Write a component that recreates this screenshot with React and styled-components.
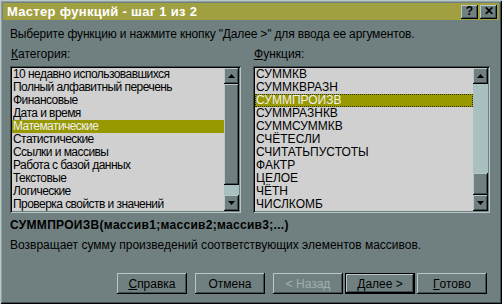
import React from "react";
import styled, { createGlobalStyle } from "styled-components";

const FACE = "#708080";
const LIGHT = "#b8c8c8";
const DARK = "#405050";

const Global = createGlobalStyle`
  html, body {
    margin: 0;
    padding: 0;
    background: ${FACE};
  }
  * { box-sizing: border-box; }
`;

const Window = styled.div`
  width: 502px;
  height: 304px;
  padding: 3px;
  background: ${FACE};
  font-family: "Liberation Sans", Arial, sans-serif;
  font-size: 12px;
  color: #000;
  display: flex;
  flex-direction: column;
  box-shadow: inset 1px 1px ${LIGHT}, inset -1px -1px #000,
    inset 2px 2px #90a0a0, inset -2px -2px ${DARK};
`;

const TitleBar = styled.div`
  height: 17px;
  background: #a0a040;
  display: flex;
  align-items: center;
  padding: 0 2px 0 4px;
`;

const Title = styled.div`
  flex: 1;
  color: #fff;
  font-weight: bold;
  font-size: 13px;
  letter-spacing: 0.3px;
`;

const raised = `
  background: ${FACE};
  box-shadow: inset -1px -1px #000, inset 1px 1px ${LIGHT},
    inset -2px -2px ${DARK};
`;

const CapButton = styled.div`
  ${raised}
  width: 17px;
  height: 14px;
  margin-left: ${(p) => (p.$gap ? "2px" : "0")};
  display: flex;
  align-items: center;
  justify-content: center;
  font-weight: bold;
  font-size: 12px;
  line-height: 1;
  padding-bottom: 1px;
`;

const Content = styled.div`
  flex: 1;
  display: flex;
  flex-direction: column;
  padding: 0 9px 0 7px;
`;

const Line = styled.div`
  height: 14px;
  line-height: 14px;
  margin-top: ${(p) => p.$mt || 0}px;
  font-weight: ${(p) => (p.$bold ? "bold" : "normal")};
  letter-spacing: ${(p) => p.$ls || 0}px;
  white-space: nowrap;
`;

const Columns = styled.div`
  display: flex;
  gap: 12px;
  margin-top: 6px;
`;

const Column = styled.div`
  width: ${(p) => p.$w}px;
  display: flex;
  flex-direction: column;
`;

const Label = styled.div`
  height: 14px;
  line-height: 14px;
  margin-bottom: 5px;
  margin-left: 1px;
`;

const ListBox = styled.div`
  height: 147px;
  padding: 2px;
  background: #d0d0d0;
  display: flex;
  letter-spacing: ${(p) => p.$ls}px;
  box-shadow: inset 1px 1px ${DARK}, inset -1px -1px ${LIGHT},
    inset 2px 2px #000, inset -2px -2px ${FACE};
`;

const Items = styled.div`
  flex: 1;
  display: flex;
  flex-direction: column;
  overflow: hidden;
`;

const Item = styled.div`
  height: 13px;
  line-height: 13px;
  padding-left: 1px;
  white-space: nowrap;
  background: ${(p) => (p.$sel ? "#989800" : "transparent")};
  color: ${(p) => (p.$sel ? "#f0f0f0" : "#000")};
  outline: ${(p) => (p.$focus ? "1px dotted #303000" : "none")};
  outline-offset: -1px;
`;

const ScrollBar = styled.div`
  width: 15px;
  display: flex;
  flex-direction: column;
  background: #a8c0c0;
`;

const Arrow = styled.div`
  ${raised}
  height: 16px;
  display: flex;
  align-items: center;
  justify-content: center;
`;

const Track = styled.div`
  flex: 1;
  display: flex;
  flex-direction: column;
`;

const Thumb = styled.div`
  ${raised}
`;

const Buttons = styled.div`
  display: flex;
  justify-content: flex-end;
  margin-top: 21px;
  padding-right: 3px;
`;

const Button = styled.div`
  ${raised}
  width: 70px;
  height: 21px;
  margin-left: ${(p) => p.$ml}px;
  display: flex;
  align-items: center;
  justify-content: center;
  color: ${(p) => (p.$disabled ? "#a0b0b0" : "#000")};
  ${(p) =>
    p.$default &&
    `box-shadow: inset 0 0 0 1px #000, inset -2px -2px #000, inset 2px 2px ${LIGHT}, inset -3px -3px ${DARK};`}
`;

const U = styled.span`
  text-decoration: underline;
`;

const Tri = ({ up }) => (
  <svg width="7" height="4" viewBox="0 0 7 4">
    <path d={up ? "M3.5 0 L7 4 L0 4 Z" : "M0 0 L7 0 L3.5 4 Z"} fill="#000" />
  </svg>
);

const Scroll = ({ top, size }) => (
  <ScrollBar>
    <Arrow>
      <Tri up />
    </Arrow>
    <Track>
      <div style={{ height: top }} />
      <Thumb style={{ height: size }} />
    </Track>
    <Arrow>
      <Tri />
    </Arrow>
  </ScrollBar>
);

const categories = [
  "10 недавно использовавшихся",
  "Полный алфавитный перечень",
  "Финансовые",
  "Дата и время",
  "Математические",
  "Статистические",
  "Ссылки и массивы",
  "Работа с базой данных",
  "Текстовые",
  "Логические",
  "Проверка свойств и значений",
];

const functions = [
  "СУММКВ",
  "СУММКВРАЗН",
  "СУММПРОИЗВ",
  "СУММРАЗНКВ",
  "СУММСУММКВ",
  "СЧЁТЕСЛИ",
  "СЧИТАТЬПУСТОТЫ",
  "ФАКТР",
  "ЦЕЛОЕ",
  "ЧЁТН",
  "ЧИСЛКОМБ",
];

export default function App() {
  return (
    <>
      <Global />
      <Window>
        <TitleBar>
          <Title>Мастер функций - шаг 1 из 2</Title>
          <CapButton>?</CapButton>
          <CapButton $gap>✕</CapButton>
        </TitleBar>
        <Content>
          <Line $mt={7} $ls={-0.15}>
            Выберите функцию и нажмите кнопку "Далее &gt;" для ввода ее аргументов.
          </Line>
          <Columns>
            <Column $w={232}>
              <Label>
                <U>К</U>атегория:
              </Label>
              <ListBox $ls={-0.55}>
                <Items>
                  {categories.map((c) => (
                    <Item key={c} $sel={c === "Математические"}>
                      {c}
                    </Item>
                  ))}
                </Items>
                <Scroll top={0} size={101} />
              </ListBox>
            </Column>
            <Column $w={238}>
              <Label>
                <U>Ф</U>ункция:
              </Label>
              <ListBox $ls={0}>
                <Items>
                  {functions.map((f) => (
                    <Item key={f} $sel={f === "СУММПРОИЗВ"} $focus={f === "СУММПРОИЗВ"}>
                      {f}
                    </Item>
                  ))}
                </Items>
                <Scroll top={89} size={22} />
              </ListBox>
            </Column>
          </Columns>
          <Line $mt={5} $bold $ls={0.3}>
            СУММПРОИЗВ(массив1;массив2;массив3;...)
          </Line>
          <Line $mt={6}>Возвращает сумму произведений соответствующих элементов массивов.</Line>
          <Buttons>
            <Button $ml={0}>
              <U>С</U>правка
            </Button>
            <Button $ml={8}>Отмена</Button>
            <Button $ml={8} $disabled>
              &lt; Наза<U>д</U>
            </Button>
            <Button $ml={2} $default>
              Далее &gt;
            </Button>
            <Button $ml={2}>
              <U>Г</U>отово
            </Button>
          </Buttons>
        </Content>
      </Window>
    </>
  );
}
